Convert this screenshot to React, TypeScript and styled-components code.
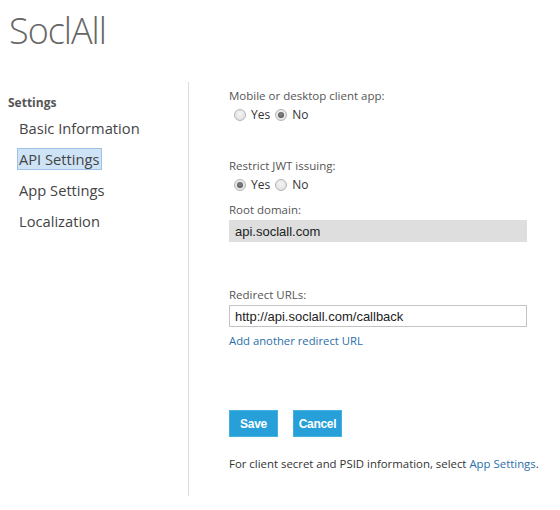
import React from 'react';
import styled, { createGlobalStyle } from 'styled-components';

const GlobalStyle = createGlobalStyle`
  body {
    margin: 0;
    background: #ffffff;
    font-family: 'Open Sans', 'Noto Sans', sans-serif;
    color: #444444;
  }
`;

const navItems = ['Basic Information', 'API Settings', 'App Settings', 'Localization'];

const App = () => {
  return (
    <Page>
      <GlobalStyle />
      <Title>SoclAll</Title>
      <Body>
        <Sidebar>
          <SideHeading>Settings</SideHeading>
          <NavList>
            {navItems.map((item) => (
              <NavItem key={item} $active={item === 'API Settings'}>
                {item}
              </NavItem>
            ))}
          </NavList>
        </Sidebar>
        <Content>
          <Field $gap={0}>
            <Label>Mobile or desktop client app:</Label>
            <RadioRow>
              <RadioLabel>
                <Radio name="mobile" defaultChecked={false} />
                Yes
              </RadioLabel>
              <RadioLabel>
                <Radio name="mobile" defaultChecked />
                No
              </RadioLabel>
            </RadioRow>
          </Field>
          <Field $gap={35}>
            <Label>Restrict JWT issuing:</Label>
            <RadioRow>
              <RadioLabel>
                <Radio name="jwt" defaultChecked />
                Yes
              </RadioLabel>
              <RadioLabel>
                <Radio name="jwt" />
                No
              </RadioLabel>
            </RadioRow>
          </Field>
          <Field $gap={9}>
            <Label>Root domain:</Label>
            <TextBox $disabled>api.soclall.com</TextBox>
          </Field>
          <Field $gap={45}>
            <Label>Redirect URLs:</Label>
            <TextBox>http://api.soclall.com/callback</TextBox>
            <Link $block>Add another redirect URL</Link>
          </Field>
          <Buttons>
            <Button>Save</Button>
            <Button>Cancel</Button>
          </Buttons>
          <Footer>
            For client secret and PSID information, select <Link>App Settings</Link>.
          </Footer>
        </Content>
      </Body>
    </Page>
  );
};

const Radio = styled.input.attrs({ type: 'radio' })`
  appearance: none;
  margin: 0 5px 0 0;
  width: 12px;
  height: 12px;
  border-radius: 50%;
  border: 1px solid #b4b4b4;
  background: radial-gradient(circle at 50% 40%, #f4f4f4 0%, #dcdcdc 100%);
  box-sizing: border-box;
  position: relative;
  &:checked::after {
    content: '';
    position: absolute;
    left: 2px;
    top: 2px;
    width: 6px;
    height: 6px;
    border-radius: 50%;
    background: radial-gradient(circle at 50% 40%, #8a8a8a 0%, #444 100%);
  }
`;
const RadioLabel = styled.label`
  display: flex;
  align-items: center;
  font-size: 12px;
  color: #333;
`;
const RadioRow = styled.div`
  display: flex;
  gap: 5px;
  margin-left: 5px;
  height: 17px;
  align-items: center;
`;
const Label = styled.div`
  font-size: 11.5px;
  line-height: 16px;
  color: #555;
  margin-bottom: 2px;
`;
const Field = styled.div<{ $gap: number }>`
  display: flex;
  flex-direction: column;
  margin-top: ${(p) => p.$gap}px;
`;
const TextBox = styled.div<{ $disabled?: boolean }>`
  width: 298px;
  height: 22px;
  box-sizing: border-box;
  border: 1px solid ${(p) => (p.$disabled ? '#dedede' : '#c4c4c4')};
  background: ${(p) => (p.$disabled ? '#dedede' : '#ffffff')};
  font-family: 'Liberation Sans', Arial, sans-serif;
  font-size: 13px;
  color: #222;
  padding: 0 5px;
  display: flex;
  align-items: center;
`;
const Link = styled.span<{ $block?: boolean }>`
  color: #2b6fa8;
  cursor: pointer;
  ${(p) => (p.$block ? 'display: block; margin-top: 5px; font-size: 11.3px; line-height: 17px;' : '')}
`;
const Buttons = styled.div`
  display: flex;
  gap: 15px;
  margin-top: 61px;
`;
const Button = styled.button`
  all: unset;
  cursor: pointer;
  min-width: 49px;
  height: 27px;
  padding: 0 3px;
  box-sizing: border-box;
  background: #279fd8;
  border: 1px solid #45b0e0;
  color: #ffffff;
  font-family: 'Liberation Sans', Arial, sans-serif;
  font-weight: 700;
  font-size: 12px;
  letter-spacing: -0.3px;
  display: flex;
  align-items: center;
  justify-content: center;
`;
const Footer = styled.div`
  margin-top: 18px;
  font-size: 11.4px;
  line-height: 17px;
  color: #333;
`;
const Content = styled.div`
  display: flex;
  flex-direction: column;
  padding: 6px 0 0 40px;
`;
const NavItem = styled.div<{ $active?: boolean }>`
  font-size: 14.7px;
  line-height: 20px;
  color: #444;
  padding: 0 1px;
  border: 1px solid ${(p) => (p.$active ? '#9dc2e6' : 'transparent')};
  background: ${(p) => (p.$active ? '#cfe3f6' : 'transparent')};
`;
const NavList = styled.div`
  display: flex;
  flex-direction: column;
  align-items: flex-start;
  gap: 9px;
  margin: 6px 0 0 17px;
`;
const SideHeading = styled.div`
  font-size: 12px;
  font-weight: 700;
  color: #555;
  margin: 12px 0 0 8px;
`;
const Sidebar = styled.div`
  width: 188px;
  border-right: 1px solid #dcdcdc;
  height: 414px;
  display: flex;
  flex-direction: column;
`;
const Body = styled.div`
  display: flex;
  margin-top: 24px;
`;
const Title = styled.h1`
  margin: 0;
  padding: 4px 0 0 9px;
  font-size: 36px;
  font-weight: 300;
  line-height: 54px;
  color: #666;
  letter-spacing: -1px;
`;
const Page = styled.div`
  width: 560px;
  height: 510px;
  overflow: hidden;
`;

export default App;
